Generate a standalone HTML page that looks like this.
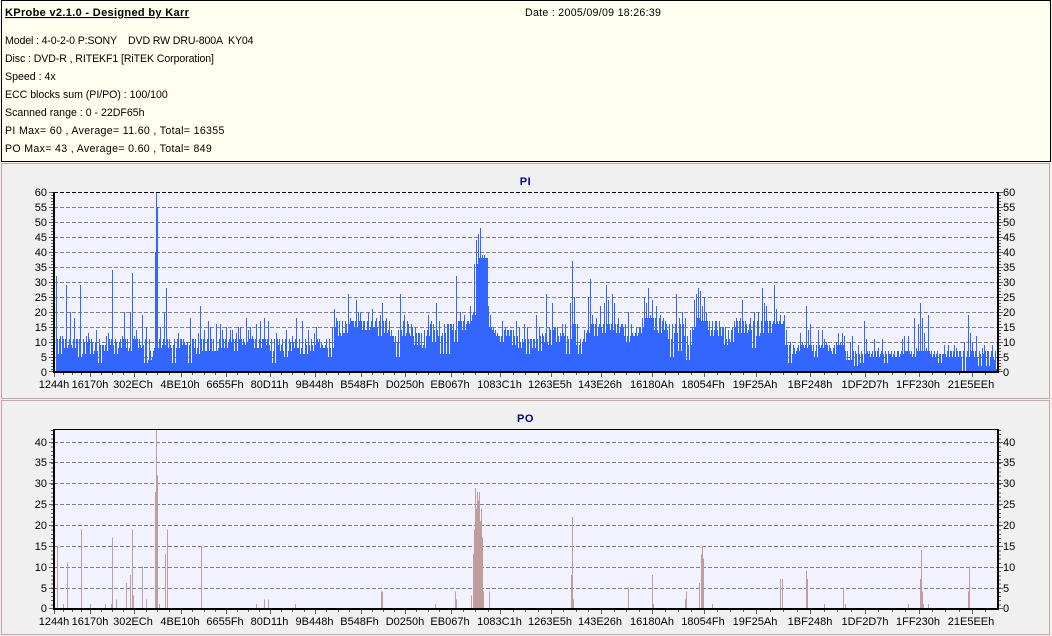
<!DOCTYPE html>
<html><head><meta charset="utf-8"><title>KProbe</title>
<style>
html,body{margin:0;padding:0;width:1052px;height:636px;overflow:hidden;background:#f0f0f0}
svg{display:block}
text{font-family:"Liberation Sans",Arial,sans-serif;font-size:11px;fill:#000;white-space:pre}
.t{font-size:10.6px}
.b{font-weight:bold}
.c{text-anchor:middle}
.e{text-anchor:end}
.h{fill:#000080;font-weight:bold;text-anchor:middle;letter-spacing:.5px}
.g{stroke:#808080;stroke-width:1;stroke-dasharray:4 2;fill:none}
.tk{stroke:#606060;stroke-width:1;fill:none}
</style></head>
<body>
<svg width="1052" height="636" viewBox="0 0 1052 636" xmlns="http://www.w3.org/2000/svg">
<defs>
<pattern id="st" x="54" y="0" width="2" height="1" patternUnits="userSpaceOnUse"><rect x="0" y="0" width="1" height="1" fill="#fff"/></pattern>
<pattern id="st2" x="55" y="0" width="2" height="1" patternUnits="userSpaceOnUse"><rect x="0" y="0" width="1" height="1" fill="#fff"/></pattern>
<mask id="m" maskUnits="userSpaceOnUse" x="54" y="190" width="944" height="183">
<rect x="54" y="190" width="944" height="183" fill="url(#st)"/>
<rect x="155" y="190" width="3" height="183" fill="#fff"/>
</mask>
<mask id="m2" maskUnits="userSpaceOnUse" x="54" y="190" width="944" height="183">
<rect x="54" y="190" width="944" height="183" fill="url(#st2)"/>
</mask>
<clipPath id="cap"><path d="M54 373V339H335V321H470V312H474V258H488V327H560V324H640V318H700V321H785V345H845V351H998V373Z"/></clipPath>
<path id="pi" fill="#3366ff" shape-rendering="crispEdges" d="M0 0V17h2V32h2V6h2V12h2V12h2V8h2V29h2V9h2V20h2V8h2V18h2V11h2V5h2V29h2V6h2V10h2V12h2V13h2V6h2V10h2V7h2V14h2V3h2V9h2V9h2V7h2V12h2V13h2V9h2V34h2V6h2V10h2V8h2V11h2V12h2V20h2V8h2V7h2V20h2V33h2V12h2V14h2V8h2V9h2V19h2V3h2V15h2V4h2V7h2V5h2V8h1V40h1V60h1V55h1V8h2V15h2V9h2V20h2V28h2V8h2V9h2V3h2V11h2V8h2V13h2V11h2V9h2V10h2V9h2V3h2V18h2V11h2V8h2V6h2V13h2V22h2V7h2V14h2V7h2V17h2V15h2V7h2V7h2V16h2V8h2V16h2V14h2V8h2V15h2V10h2V14h2V14h2V7h2V13h2V15h2V15h2V9h2V10h2V18h2V14h2V15h2V12h2V8h2V16h2V8h2V17h2V11h2V18h2V9h2V17h2V7h2V3h2V11h2V13h2V9h2V7h2V11h2V5h2V14h2V7h2V10h2V12h2V8h2V18h2V8h2V6h2V17h2V6h2V9h2V14h2V7h2V9h2V13h2V15h2V10h2V8h2V9h2V8h2V11h2V5h2V8h2V15h2V21h2V18h2V12h2V13h2V17h2V13h2V16h2V26h2V18h2V17h2V15h2V24h2V20h2V20h2V14h2V17h2V14h2V20h2V15h2V21h2V15h2V18h2V12h2V19h2V23h2V13h2V18h2V14h2V12h2V12h2V10h2V5h2V14h2V26h2V12h2V19h2V13h2V16h2V12h2V15h2V9h2V13h2V13h2V9h2V8h2V14h2V12h2V19h2V16h2V10h2V14h2V23h2V12h2V6h2V13h2V16h2V6h2V16h2V16h2V14h2V10h2V32h2V17h2V20h2V14h2V19h2V16h2V17h2V22h2V19h2V36h2V44h2V46h2V48h2V39h2V39h2V38h2V22h2V19h2V14h2V13h2V12h2V12h2V10h2V17h2V14h2V12h2V14h2V14h2V9h2V12h2V17h2V8h2V10h2V11h2V16h2V6h2V11h2V11h2V8h2V11h2V19h2V7h2V12h2V13h2V10h2V26h2V9h2V14h2V23h2V15h2V10h2V12h2V13h2V16h2V12h2V6h2V11h2V23h2V37h2V25h2V9h2V6h2V11h2V10h2V14h2V13h2V25h2V31h2V19h2V12h2V18h2V15h2V22h2V13h2V23h2V29h2V24h2V14h2V26h2V23h2V13h2V18h2V15h2V16h2V12h2V10h2V20h2V12h2V13h2V12h2V15h2V13h2V15h2V18h2V25h2V23h2V28h2V19h2V24h2V14h2V22h2V13h2V19h2V17h2V14h2V16h2V11h2V5h2V16h2V13h2V26h2V7h2V16h2V20h2V12h2V4h2V9h2V14h2V15h2V24h2V26h2V28h2V27h2V22h2V25h2V20h2V14h2V12h2V17h2V14h2V17h2V12h2V15h2V15h2V9h2V11h2V14h2V10h2V15h2V17h2V18h2V13h2V18h2V24h2V13h2V16h2V14h2V18h2V8h2V20h2V12h2V20h2V13h2V28h2V23h2V22h2V13h2V17h2V16h2V29h2V21h2V16h2V19h2V16h2V19h2V14h2V3h2V10h2V6h2V8h2V7h2V9h2V13h2V10h2V8h2V22h2V14h2V16h2V7h2V5h2V9h2V14h2V8h2V14h2V11h2V10h2V7h2V8h2V6h2V9h2V10h2V13h2V10h2V13h2V12h2V4h2V4h2V10h2V12h2V2h2V6h2V9h2V3h2V6h2V17h2V11h2V6h2V5h2V7h2V11h2V5h2V8h2V6h2V11h2V3h2V6h2V7h2V6h2V5h2V7h2V5h2V7h2V6h2V11h2V12h2V7h2V12h2V6h2V5h2V18h2V8h2V16h2V23h2V18h2V13h2V8h2V19h2V6h2V5h2V7h2V6h2V3h2V6h2V6h2V9h2V5h2V9h2V7h2V5h2V9h2V8h2V5h2V7h2V0h2V10h2V5h2V19h2V13h2V10h2V5h2V12h2V2h2V6h2V8h2V9h2V2h2V7h2V5h2V9h2V4h2V1h2V0z"/>
</defs>
<rect x="0" y="0" width="1052" height="636" fill="#f4f0f0"/>
<rect x="1.5" y="0.5" width="1049" height="161" fill="#fffff0" stroke="#000" stroke-width="1"/>
<text x="5" y="16" class="t b" text-decoration="underline" style="font-size:11px;letter-spacing:.33px">KProbe v2.1.0 - Designed by Karr</text>
<text x="525" y="16" class="t" style="letter-spacing:.3px">Date : 2005/09/09 18:26:39</text>
<text x="5" y="44" class="t" style="letter-spacing:-.13px">Model : 4-0-2-0 P:SONY    DVD RW DRU-800A  KY04</text>
<text x="5" y="62" class="t" style="letter-spacing:-.1px">Disc : DVD-R , RITEKF1 [RiTEK Corporation]</text>
<text x="5" y="80" class="t">Speed : 4x</text>
<text x="5" y="98" class="t" style="letter-spacing:-.03px">ECC blocks sum (PI/PO) : 100/100</text>
<text x="5" y="116" class="t">Scanned range : 0 - 22DF65h</text>
<text x="5" y="134" class="t" style="letter-spacing:.33px">PI Max= 60 , Average= 11.60 , Total= 16355</text>
<text x="5" y="152" class="t" style="letter-spacing:.33px">PO Max= 43 , Average= 0.60 , Total= 849</text>

<rect x="1.5" y="163.5" width="1048" height="235" fill="#f0f0f0" stroke="#c4a4a4"/>
<rect x="1.5" y="400.5" width="1048" height="234" fill="#f0f0f0" stroke="#c4a4a4"/>

<!-- PI chart -->
<text x="525.5" y="185" class="h">PI</text>
<rect x="54" y="192" width="944" height="180" fill="#f2f2ff"/>
<path class="g" shape-rendering="crispEdges" d="M54 207.5H998M54 222.5H998M54 237.5H998M54 252.5H998M54 267.5H998M54 282.5H998M54 297.5H998M54 312.5H998M54 327.5H998M54 342.5H998M54 357.5H998"/>
<g clip-path="url(#cap)"><g mask="url(#m2)"><g transform="translate(57,372) scale(1,-3)"><use href="#pi"/></g></g></g>
<g mask="url(#m)"><g transform="translate(54,372) scale(1,-3)"><use href="#pi"/></g></g>
<path stroke="#000" stroke-width="1" stroke-dasharray="4 2" fill="none" shape-rendering="crispEdges" d="M54 192.5H998"/>
<rect x="53" y="192" width="2" height="181" fill="#000"/>
<rect x="997" y="192" width="2" height="181" fill="#000"/>
<rect x="53" y="371" width="946" height="2" fill="#000"/>
<path class="tk" shape-rendering="crispEdges" d="M49 192.5H53M49 207.5H53M49 222.5H53M49 237.5H53M49 252.5H53M49 267.5H53M49 282.5H53M49 297.5H53M49 312.5H53M49 327.5H53M49 342.5H53M49 357.5H53M49 371.5H53M999 192.5H1003M999 207.5H1003M999 222.5H1003M999 237.5H1003M999 252.5H1003M999 267.5H1003M999 282.5H1003M999 297.5H1003M999 312.5H1003M999 327.5H1003M999 342.5H1003M999 357.5H1003M999 371.5H1003"/>
<path stroke="#606060" stroke-width="2" stroke-dasharray="1 2" fill="none" shape-rendering="crispEdges" d="M52 192V372M1000 192V372"/>
<g id="xt">
<path class="tk" shape-rendering="crispEdges" d="M54.5 373v4M90.5 373v4M134.5 373v4M181.5 373v4M226.5 373v4M270.5 373v4M315.5 373v4M361.5 373v4M405.5 373v4M451.5 373v4M500.5 373v4M551.5 373v4M601.5 373v4M652.5 373v4M704.5 373v4M756.5 373v4M810.5 373v4M865.5 373v4M919.5 373v4M972.5 373v4M63.5 373v2M72.5 373v2M81.5 373v2M101.5 373v2M112.5 373v2M123.5 373v2M146.5 373v2M157.5 373v2M169.5 373v2M192.5 373v2M204.5 373v2M215.5 373v2M237.5 373v2M248.5 373v2M259.5 373v2M281.5 373v2M292.5 373v2M304.5 373v2M326.5 373v2M338.5 373v2M349.5 373v2M372.5 373v2M383.5 373v2M394.5 373v2M416.5 373v2M428.5 373v2M439.5 373v2M463.5 373v2M475.5 373v2M488.5 373v2M513.5 373v2M525.5 373v2M538.5 373v2M563.5 373v2M576.5 373v2M588.5 373v2M614.5 373v2M626.5 373v2M639.5 373v2M665.5 373v2M678.5 373v2M691.5 373v2M717.5 373v2M730.5 373v2M743.5 373v2M770.5 373v2M783.5 373v2M797.5 373v2M824.5 373v2M837.5 373v2M851.5 373v2M878.5 373v2M892.5 373v2M905.5 373v2M932.5 373v2M945.5 373v2M959.5 373v2M985.5 373v2"/>
</g>
<text x="47" y="196" class="e">60</text><text x="47" y="211" class="e">55</text><text x="47" y="226" class="e">50</text><text x="47" y="241" class="e">45</text><text x="47" y="256" class="e">40</text><text x="47" y="271" class="e">35</text><text x="47" y="286" class="e">30</text><text x="47" y="301" class="e">25</text><text x="47" y="316" class="e">20</text><text x="47" y="331" class="e">15</text><text x="47" y="346" class="e">10</text><text x="47" y="361" class="e">5</text><text x="47" y="376" class="e">0</text>
<text x="1003" y="196">60</text><text x="1003" y="211">55</text><text x="1003" y="226">50</text><text x="1003" y="241">45</text><text x="1003" y="256">40</text><text x="1003" y="271">35</text><text x="1003" y="286">30</text><text x="1003" y="301">25</text><text x="1003" y="316">20</text><text x="1003" y="331">15</text><text x="1003" y="346">10</text><text x="1003" y="361">5</text><text x="1003" y="376">0</text>
<g>
<text x="54" y="388" class="c">1244h</text><text x="90" y="388" class="c">16170h</text><text x="133" y="388" class="c">302ECh</text><text x="180" y="388" class="c">4BE10h</text><text x="225" y="388" class="c">6655Fh</text><text x="269.5" y="388" class="c">80D11h</text><text x="314.5" y="388" class="c">9B448h</text><text x="359.5" y="388" class="c">B548Fh</text><text x="405" y="388" class="c">D0250h</text><text x="450" y="388" class="c">EB067h</text><text x="499.5" y="388" class="c">1083C1h</text><text x="550" y="388" class="c">1263E5h</text><text x="600" y="388" class="c">143E26h</text><text x="652" y="388" class="c">16180Ah</text><text x="703" y="388" class="c">18054Fh</text><text x="755" y="388" class="c">19F25Ah</text><text x="810" y="388" class="c">1BF248h</text><text x="865" y="388" class="c">1DF2D7h</text><text x="918" y="388" class="c">1FF230h</text><text x="971" y="388" class="c">21E5EEh</text>
</g>

<!-- PO chart -->
<text x="525.5" y="422" class="h">PO</text>
<rect x="54" y="430" width="944" height="178" fill="#f2f2ff"/>
<path class="g" shape-rendering="crispEdges" d="M54 442.5H998M54 462.5H998M54 483.5H998M54 504.5H998M54 525.5H998M54 546.5H998M54 567.5H998M54 588.5H998"/>
<g transform="translate(0,608) scale(1,-4.14)">
<path stroke="#c09c9c" stroke-width="1" fill="none" shape-rendering="crispEdges" d="M57.5 0V15M63.5 0V1M67.5 0V11M81.5 0V19M90.5 0V1M105.5 0V1M111.5 0V1M112.5 0V17M116.5 0V2M126.5 0V6M130.5 0V8M132.5 0V19M133.5 0V3M142.5 0V10M146.5 0V2M155.5 0V28M156.5 0V43M157.5 0V32M159.5 0V1M165.5 0V13M167.5 0V19M201.5 0V15M256.5 0V1M264.5 0V2M268.5 0V2M295.5 0V1M381.5 0V4M382.5 0V4M435.5 0V1M455.5 0V4M456.5 0V2M471.5 0V3M473.5 0V13M474.5 0V19M475.5 0V29M476.5 0V24M477.5 0V28M478.5 0V26M479.5 0V28M480.5 0V21M481.5 0V24M482.5 0V17M483.5 0V4M489.5 0V4M571.5 0V8M572.5 0V22M573.5 0V2M628.5 0V5M652.5 0V8M653.5 0V1M685.5 0V2M686.5 0V4M699.5 0V6M701.5 0V13M702.5 0V15M703.5 0V12M712.5 0V1M780.5 0V7M782.5 0V7M806.5 0V9M807.5 0V7M824.5 0V1M843.5 0V5M845.5 0V1M908.5 0V1M920.5 0V7M921.5 0V14M922.5 0V4M923.5 0V1M928.5 0V1M968.5 0V4M969.5 0V10"/>
</g>
<rect x="53" y="429" width="946" height="1" fill="#000"/>
<rect x="53" y="429" width="2" height="181" fill="#000"/>
<rect x="997" y="429" width="2" height="181" fill="#000"/>
<rect x="53" y="608" width="946" height="2" fill="#000"/>
<path class="tk" shape-rendering="crispEdges" d="M49 442.5H53M49 462.5H53M49 483.5H53M49 504.5H53M49 525.5H53M49 546.5H53M49 567.5H53M49 588.5H53M49 608.5H53M999 442.5H1003M999 462.5H1003M999 483.5H1003M999 504.5H1003M999 525.5H1003M999 546.5H1003M999 567.5H1003M999 588.5H1003M999 608.5H1003"/>
<path stroke="#606060" stroke-width="2" stroke-dasharray="1 3.15" fill="none" shape-rendering="crispEdges" d="M52 430V608M1000 430V608"/>
<g transform="translate(0,237)">
<path class="tk" shape-rendering="crispEdges" d="M54.5 373v4M90.5 373v4M134.5 373v4M181.5 373v4M226.5 373v4M270.5 373v4M315.5 373v4M361.5 373v4M405.5 373v4M451.5 373v4M500.5 373v4M551.5 373v4M601.5 373v4M652.5 373v4M704.5 373v4M756.5 373v4M810.5 373v4M865.5 373v4M919.5 373v4M972.5 373v4M63.5 373v2M72.5 373v2M81.5 373v2M101.5 373v2M112.5 373v2M123.5 373v2M146.5 373v2M157.5 373v2M169.5 373v2M192.5 373v2M204.5 373v2M215.5 373v2M237.5 373v2M248.5 373v2M259.5 373v2M281.5 373v2M292.5 373v2M304.5 373v2M326.5 373v2M338.5 373v2M349.5 373v2M372.5 373v2M383.5 373v2M394.5 373v2M416.5 373v2M428.5 373v2M439.5 373v2M463.5 373v2M475.5 373v2M488.5 373v2M513.5 373v2M525.5 373v2M538.5 373v2M563.5 373v2M576.5 373v2M588.5 373v2M614.5 373v2M626.5 373v2M639.5 373v2M665.5 373v2M678.5 373v2M691.5 373v2M717.5 373v2M730.5 373v2M743.5 373v2M770.5 373v2M783.5 373v2M797.5 373v2M824.5 373v2M837.5 373v2M851.5 373v2M878.5 373v2M892.5 373v2M905.5 373v2M932.5 373v2M945.5 373v2M959.5 373v2M985.5 373v2"/>
</g>
<text x="47" y="446" class="e">40</text><text x="47" y="466" class="e">35</text><text x="47" y="487" class="e">30</text><text x="47" y="508" class="e">25</text><text x="47" y="529" class="e">20</text><text x="47" y="550" class="e">15</text><text x="47" y="571" class="e">10</text><text x="47" y="592" class="e">5</text><text x="47" y="612" class="e">0</text>
<text x="1003" y="446">40</text><text x="1003" y="466">35</text><text x="1003" y="487">30</text><text x="1003" y="508">25</text><text x="1003" y="529">20</text><text x="1003" y="550">15</text><text x="1003" y="571">10</text><text x="1003" y="592">5</text><text x="1003" y="612">0</text>
<g>
<text x="54" y="625" class="c">1244h</text><text x="90" y="625" class="c">16170h</text><text x="133" y="625" class="c">302ECh</text><text x="180" y="625" class="c">4BE10h</text><text x="225" y="625" class="c">6655Fh</text><text x="269.5" y="625" class="c">80D11h</text><text x="314.5" y="625" class="c">9B448h</text><text x="359.5" y="625" class="c">B548Fh</text><text x="405" y="625" class="c">D0250h</text><text x="450" y="625" class="c">EB067h</text><text x="499.5" y="625" class="c">1083C1h</text><text x="550" y="625" class="c">1263E5h</text><text x="600" y="625" class="c">143E26h</text><text x="652" y="625" class="c">16180Ah</text><text x="703" y="625" class="c">18054Fh</text><text x="755" y="625" class="c">19F25Ah</text><text x="810" y="625" class="c">1BF248h</text><text x="865" y="625" class="c">1DF2D7h</text><text x="918" y="625" class="c">1FF230h</text><text x="971" y="625" class="c">21E5EEh</text>
</g>
</svg>
</body></html>
